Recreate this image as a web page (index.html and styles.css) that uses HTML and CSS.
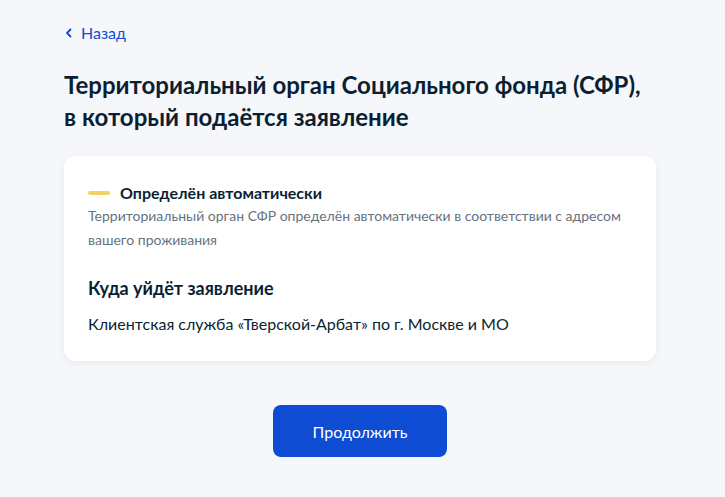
FILE: index.html
```html
<!DOCTYPE html>
<html lang="ru">
<head>
  <meta charset="UTF-8" />
  <meta name="viewport" content="width=device-width, initial-scale=1.0" />
  <title>Территориальный орган СФР</title>
  <link rel="stylesheet" href="styles.css">
</head>
<body>
  <div class="container">
    <a class="back" href="#">
      <svg width="8" height="10" viewBox="0 0 8 10"><path d="M5.5 1.5 L2 5 L5.5 8.5" fill="none" stroke="#0d4cd3" stroke-width="1.8" stroke-linecap="round" stroke-linejoin="round"/></svg>
      <span>Назад</span>
    </a>

    <h1>Территориальный орган Социального фонда (СФР), в который подаётся заявление</h1>

    <div class="card">
      <div class="status">
        <span class="mark"></span>
        <span class="status-title">Определён автоматически</span>
      </div>
      <p class="hint">Территориальный орган СФР определён автоматически в соответствии с адресом вашего проживания</p>

      <h2>Куда уйдёт заявление</h2>
      <p class="office">Клиентская служба «Тверской-Арбат» по г. Москве и МО</p>
    </div>

    <div class="actions">
      <button class="full-btn">Продолжить</button>
    </div>
  </div>
</body>
</html>
```

FILE: styles.css
```css
body {
  margin: 0;
  font-family: Lato, "Noto Sans", sans-serif;
  background-color: #f5f7fa;
  color: #0b1f33;
}

.container {
  width: 592px;
  padding: 22px 0 0 64px;
}

.back {
  display: flex;
  align-items: center;
  gap: 8px;
  color: #0d4cd3;
  text-decoration: none;
  font-size: 16px;
  line-height: 22px;
  padding-left: 1px;
}

h1 {
  font-size: 24px;
  line-height: 32px;
  font-weight: bold;
  margin: 25px 0 23px;
  width: 590px;
}

.card {
  background-color: #fff;
  border-radius: 12px;
  padding: 26px 24px 25px;
  box-shadow: 0 2px 8px rgba(11, 31, 51, 0.06);
}

.status {
  display: flex;
  align-items: center;
  gap: 10px;
}

.mark {
  width: 22px;
  height: 4px;
  border-radius: 2px;
  background-color: #f2d264;
}

.status-title {
  font-size: 16px;
  font-weight: bold;
  line-height: 22px;
}

.hint {
  margin: 0;
  font-size: 14px;
  line-height: 24px;
  color: #66727f;
}

h2 {
  font-size: 18px;
  line-height: 24px;
  font-weight: bold;
  margin: 24px 0 12px;
}

.office {
  margin: 0;
  font-size: 16px;
  line-height: 24px;
}

.actions {
  display: flex;
  justify-content: center;
  margin-top: 44px;
}

.full-btn {
  width: 174px;
  height: 52px;
  background-color: #0d4cd3;
  color: white;
  border: none;
  border-radius: 8px;
  font-family: Lato, "Noto Sans", sans-serif;
  font-size: 16px;
  cursor: pointer;
}
```
